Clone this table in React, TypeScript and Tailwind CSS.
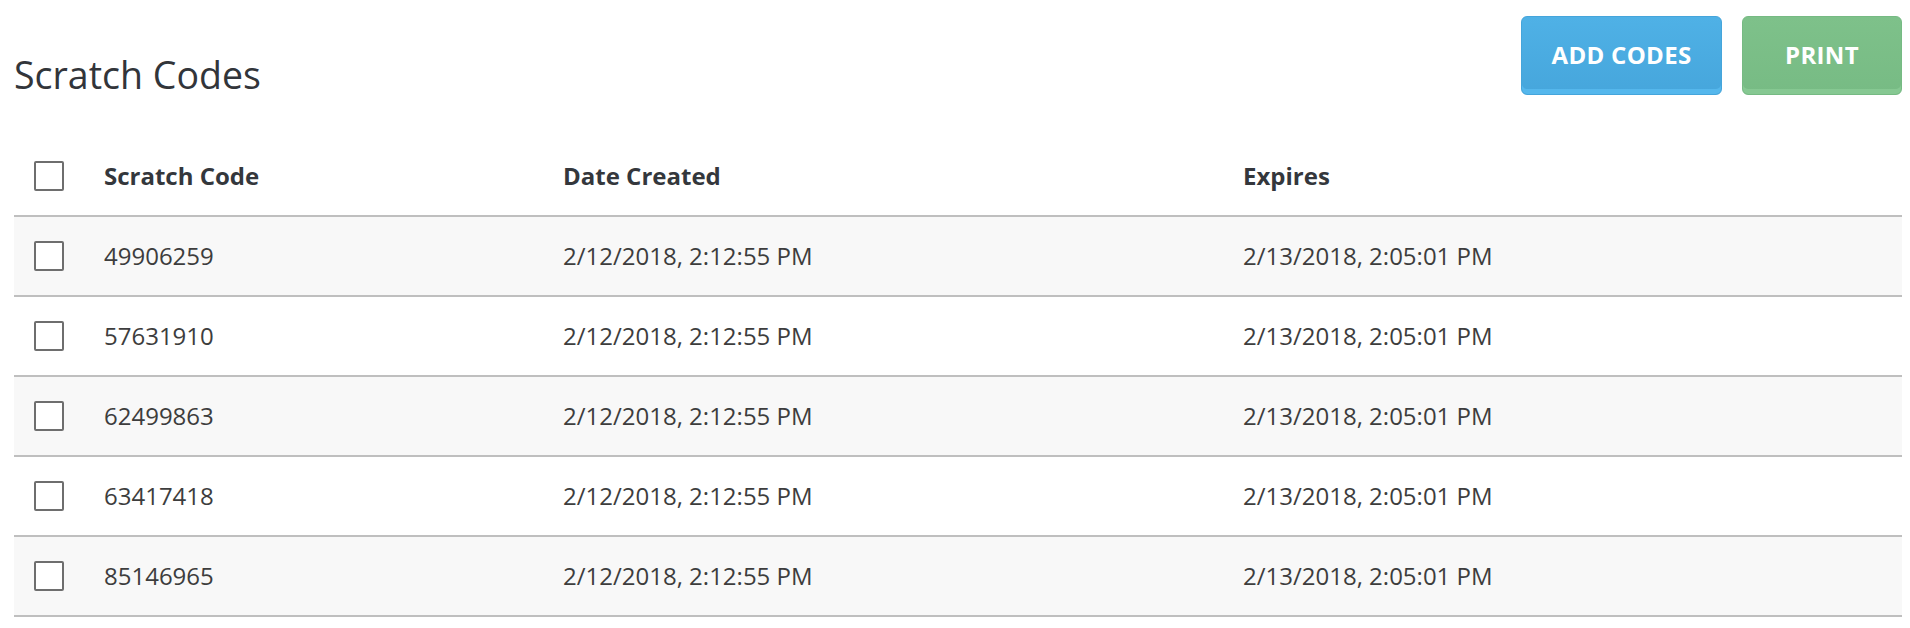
import { useState } from 'react';

const rows = [
    { code: '49906259', created: '2/12/2018, 2:12:55 PM', expires: '2/13/2018, 2:05:01 PM' },
    { code: '57631910', created: '2/12/2018, 2:12:55 PM', expires: '2/13/2018, 2:05:01 PM' },
    { code: '62499863', created: '2/12/2018, 2:12:55 PM', expires: '2/13/2018, 2:05:01 PM' },
    { code: '63417418', created: '2/12/2018, 2:12:55 PM', expires: '2/13/2018, 2:05:01 PM' },
    { code: '85146965', created: '2/12/2018, 2:12:55 PM', expires: '2/13/2018, 2:05:01 PM' },
];

function Box({ checked, onClick }: { checked: boolean; onClick: () => void }) {
    return (
        <button
            onClick={onClick}
            className="w-[30px] h-[30px] border-2 border-[#6e6e6e] rounded-[2px] bg-white flex items-center justify-center"
        >
            {checked && <span className="w-[16px] h-[16px] bg-[#6e6e6e]"></span>}
        </button>
    );
}

export default function App() {
    const [selected, setSelected] = useState<string[]>([]);

    const toggle = (code: string) =>
        setSelected((s) => (s.includes(code) ? s.filter((c) => c !== code) : [...s, code]));
    const allChecked = selected.length === rows.length;

    return (
        <div className="min-h-screen bg-white pl-[14px] pr-[8px] pt-[16px] font-['Open_Sans',sans-serif]">
            {/* title + actions */}
            <div className="flex justify-between h-[81px] mb-[40px]">
                <h1 className="pt-[34px] text-[37.5px] leading-[50px] text-[#32353a] font-normal">
                    Scratch Codes
                </h1>
                <div className="flex gap-[20px] h-[79px]">
                    <button className="w-[201px] rounded-[6px] bg-gradient-to-b from-[#4fb1e6] to-[#46a6dc] border border-[#45a5db] shadow-[inset_0_-5px_0_#55b7ec] text-white text-[24px] font-bold tracking-[0.3px] pb-[2px]">
                        ADD CODES
                    </button>
                    <button className="w-[160px] rounded-[6px] bg-gradient-to-b from-[#7ec18a] to-[#77bb84] border border-[#76ba83] shadow-[inset_0_-5px_0_#86c892] text-white text-[24px] font-bold tracking-[0.3px] pb-[2px]">
                        PRINT
                    </button>
                </div>
            </div>

            {/* table */}
            <div>
                <div className="grid grid-cols-[90px_459px_680px_1fr] items-center h-[80px] border-b-2 border-[#bfbfbf] text-[24px] font-bold text-[#34373c]">
                    <div className="pl-[20px]">
                        <Box
                            checked={allChecked}
                            onClick={() => setSelected(allChecked ? [] : rows.map((r) => r.code))}
                        />
                    </div>
                    <div>Scratch Code</div>
                    <div>Date Created</div>
                    <div>Expires</div>
                </div>
                {rows.map((row, i) => (
                    <div
                        key={row.code}
                        className={`grid grid-cols-[90px_459px_680px_1fr] items-center h-[80px] border-b-2 border-[#bfbfbf] text-[24px] text-[#3d3d3d] ${i % 2 === 0 ? 'bg-[#f8f8f8]' : 'bg-white'}`}
                    >
                        <div className="pl-[20px]">
                            <Box checked={selected.includes(row.code)} onClick={() => toggle(row.code)} />
                        </div>
                        <div>{row.code}</div>
                        <div>{row.created}</div>
                        <div>{row.expires}</div>
                    </div>
                ))}
            </div>
        </div>
    );
}
